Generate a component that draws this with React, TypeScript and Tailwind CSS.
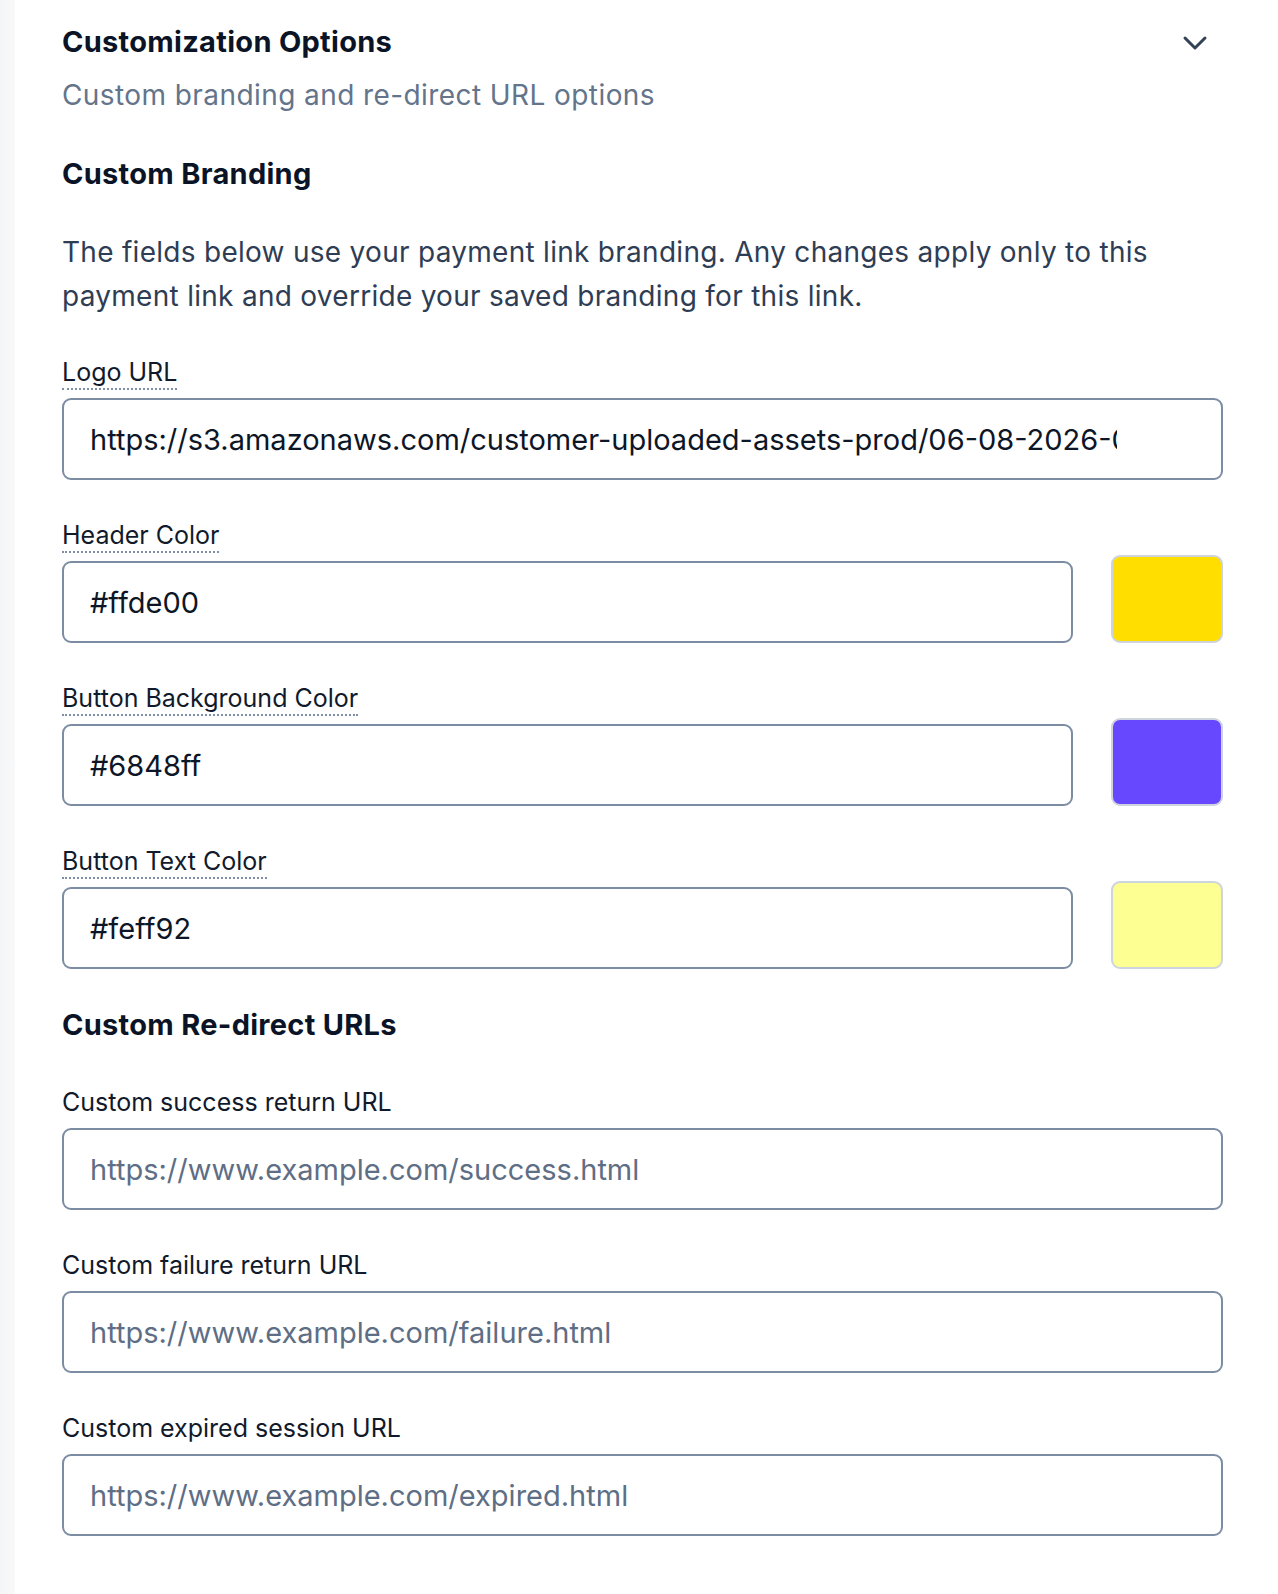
import { ChevronDown } from 'lucide-react'

const FONT = "font-['Inter','Liberation_Sans',sans-serif]"

function FieldLabel({ text, dotted }: { text: string; dotted?: boolean }) {
  return (
    <div className="h-[34px]">
      <span
        className={
          dotted
            ? 'inline-block text-[25px] leading-[32px] text-[#111a2b] border-b-2 border-dotted border-[#7d8ea6]'
            : 'inline-block text-[25px] leading-[32px] text-[#111a2b] border-b-2 border-transparent'
        }
      >
        {text}
      </span>
    </div>
  )
}

function TextField({ value, placeholder, padRight }: { value?: string; placeholder?: string; padRight?: boolean }) {
  return (
    <input
      readOnly
      value={value ?? ''}
      placeholder={placeholder}
      className={
        padRight
          ? 'block w-full h-[82px] rounded-[9px] border-2 border-[#7b8ca3] bg-white pl-[26px] pr-[104px] text-[29px] text-[#0d1626] placeholder:text-[#5e6e85] outline-none'
          : 'block w-full h-[82px] rounded-[9px] border-2 border-[#7b8ca3] bg-white pl-[26px] pr-[26px] text-[29px] text-[#0d1626] placeholder:text-[#5e6e85] outline-none'
      }
    />
  )
}

function ColorField({ label, value, swatch }: { label: string; value: string; swatch: string }) {
  return (
    <div className="flex items-end gap-[38px]">
      <div className="flex-1 flex flex-col gap-[8px]">
        <FieldLabel text={label} dotted />
        <TextField value={value} />
      </div>
      <div
        className="w-[112px] h-[88px] rounded-[9px] border-2 border-[#cdd4de]"
        style={{ backgroundColor: swatch }}
      />
    </div>
  )
}

function UrlField({ label, placeholder }: { label: string; placeholder: string }) {
  return (
    <div className="flex flex-col gap-[8px]">
      <FieldLabel text={label} />
      <TextField placeholder={placeholder} />
    </div>
  )
}

export default function App() {
  return (
    <div className={`flex min-h-[1594px] bg-white ${FONT}`}>
      <div className="w-[15px] shrink-0 bg-gradient-to-r from-[#f4f5f6] to-[#f9f9fa]" />
      <div className="flex-1 pl-[47px] pr-[55px] pt-[22px] pb-[60px]">
        <div className="flex items-start justify-between">
          <div>
            <h2 className="text-[29px] leading-[40px] font-bold tracking-[0.01em] text-[#0a1426]">
              Customization Options
            </h2>
            <p className="mt-[13px] text-[28px] leading-[40px] tracking-[0.015em] text-[#64748b]">
              Custom branding and re-direct URL options
            </p>
          </div>
          <ChevronDown className="mt-[1px] mr-[8px] w-[40px] h-[40px] text-[#334155]" strokeWidth={1.8} />
        </div>

        <h3 className="mt-[41px] text-[29px] leading-[36px] font-bold tracking-[0.01em] text-[#0a1426]">
          Custom Branding
        </h3>
        <p className="mt-[38px] text-[28px] leading-[44px] tracking-[0.01em] text-[#2e3d54]">
          The fields below use your payment link branding. Any changes apply only to this payment link and override
          your saved branding for this link.
        </p>

        <div className="mt-[38px] flex flex-col gap-[39px]">
          <div className="flex flex-col gap-[8px]">
            <FieldLabel text="Logo URL" dotted />
            <TextField
              value="https://s3.amazonaws.com/customer-uploaded-assets-prod/06-08-2026-0c1f2a9e-logo.png"
              padRight
            />
          </div>
          <ColorField label="Header Color" value="#ffde00" swatch="#ffde00" />
          <ColorField label="Button Background Color" value="#6848ff" swatch="#6848ff" />
          <ColorField label="Button Text Color" value="#feff92" swatch="#feff92" />
        </div>

        <h3 className="mt-[38px] text-[29px] leading-[36px] font-bold tracking-[0.01em] text-[#0a1426]">
          Custom Re-direct URLs
        </h3>

        <div className="mt-[43px] flex flex-col gap-[39px]">
          <UrlField label="Custom success return URL" placeholder="https://www.example.com/success.html" />
          <UrlField label="Custom failure return URL" placeholder="https://www.example.com/failure.html" />
          <UrlField label="Custom expired session URL" placeholder="https://www.example.com/expired.html" />
        </div>
      </div>
    </div>
  )
}
